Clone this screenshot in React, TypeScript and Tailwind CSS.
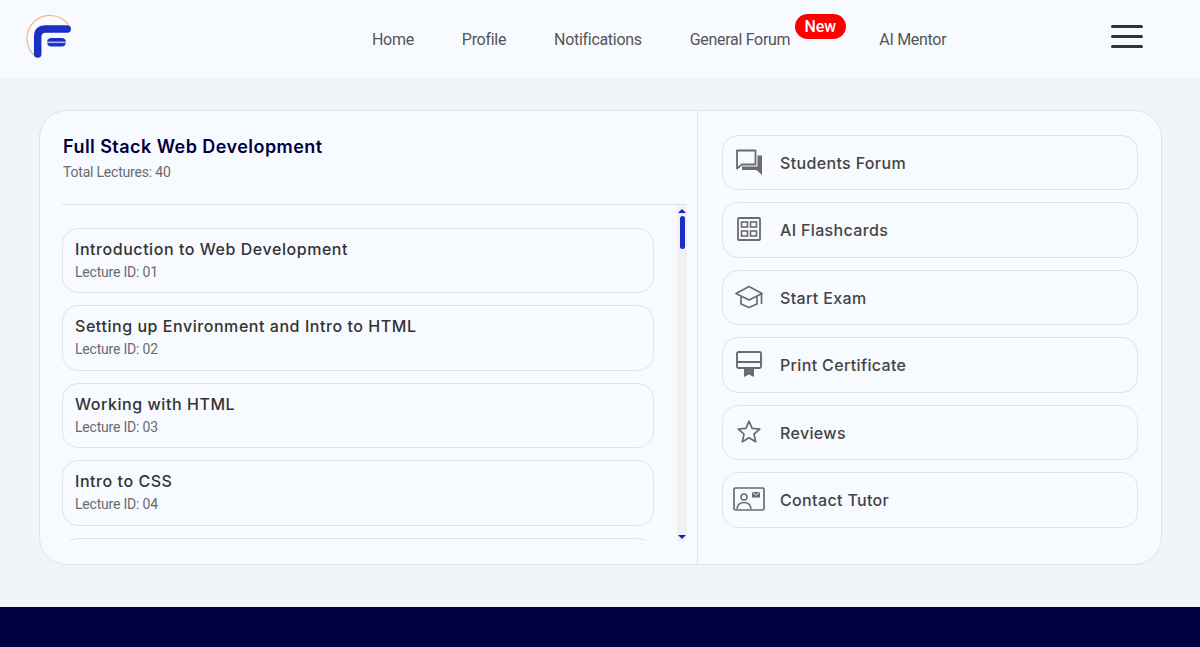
const lectures = [
  { title: 'Introduction to Web Development', id: '01' },
  { title: 'Setting up Environment and Intro to HTML', id: '02' },
  { title: 'Working with HTML', id: '03' },
  { title: 'Intro to CSS', id: '04' },
];

function Logo() {
  return (
    <svg width="46" height="46" viewBox="0 0 46 46" fill="none" className="overflow-visible">
      <path d="M42.4 10.7A23 23 0 1 0 10 42.7" stroke="#f7b27a" strokeWidth="1.1" />
      <path d="M11.7 40V23Q11.7 15 19.7 15H41.2" stroke="#1c2fc4" strokeWidth="7.5" strokeLinecap="round" strokeLinejoin="round" />
      <rect x="21" y="24" width="19" height="8.5" rx="4.2" fill="#1c2fc4" />
      <rect x="21" y="27.5" width="19" height="1.6" fill="#aab2ea" />
    </svg>
  );
}

function ForumIcon() {
  return (
    <svg width="28" height="28" viewBox="0 0 28 28" fill="none">
      <path d="M2 2.5h18.5v14H7l-5 4z" stroke="#6b6b6b" strokeWidth="1.8" strokeLinejoin="round" />
      <path d="M22.5 7.5H27V27l-5.5-5H7v-3.5h15.5z" fill="#6b6b6b" />
    </svg>
  );
}

function CardsIcon() {
  return (
    <svg width="24" height="24" viewBox="0 0 24 24" fill="none" stroke="#6b6b6b" strokeWidth="1.6">
      <rect x="1" y="1" width="22" height="22" rx="1" strokeWidth="1.8" />
      <rect x="4.5" y="5" width="6" height="5" />
      <rect x="13.5" y="5" width="6" height="5" />
      <rect x="4.5" y="14" width="6" height="5" />
      <rect x="13.5" y="14" width="6" height="5" />
    </svg>
  );
}

function CapIcon() {
  return (
    <svg width="28" height="24" viewBox="0 0 28 24" fill="none" stroke="#6b6b6b" strokeWidth="1.7" strokeLinejoin="round">
      <path d="M14 1.5 27 8.5 14 15 1 8.5z" />
      <path d="M6 11.5V19l8 3.5 8-3.5v-7.5" />
      <path d="M26.5 9v10" />
    </svg>
  );
}

function CertificateIcon() {
  return (
    <svg width="26" height="26" viewBox="0 0 26 26" fill="none">
      <rect x="1" y="1" width="24" height="16" rx="1.5" stroke="#6b6b6b" strokeWidth="1.9" />
      <path d="M1 11h24" stroke="#6b6b6b" strokeWidth="2" />
      <path d="M8 17h10v9l-5-2.5L8 26z" fill="#6b6b6b" />
    </svg>
  );
}

function StarIcon() {
  return (
    <svg width="26" height="25" viewBox="0 0 26 25" fill="none">
      <path d="M13 2.2 16.1 9.3 23.8 10 18 15.1 19.7 22.7 13 18.7 6.3 22.7 8 15.1 2.2 10 9.9 9.3z" stroke="#6b6b6b" strokeWidth="1.7" strokeLinejoin="round" />
    </svg>
  );
}

function ContactIcon() {
  return (
    <svg width="32" height="24" viewBox="0 0 32 24" fill="none">
      <rect x="1" y="1" width="30" height="22" rx="1.5" stroke="#6b6b6b" strokeWidth="1.7" />
      <circle cx="11" cy="10" r="3" stroke="#6b6b6b" strokeWidth="1.5" />
      <path d="M4 22c.5-4.5 3.5-6.5 7-6.5s6.5 2 7 6.5" stroke="#6b6b6b" strokeWidth="1.5" />
      <rect x="19" y="5" width="8" height="5.5" fill="#6b6b6b" />
      <path d="m19.5 5.5 3.5 2.8 3.5-2.8" stroke="#f7faff" strokeWidth="0.9" />
    </svg>
  );
}

const actions = [
  { label: 'Students Forum', icon: <ForumIcon /> },
  { label: 'AI Flashcards', icon: <CardsIcon /> },
  { label: 'Start Exam', icon: <CapIcon /> },
  { label: 'Print Certificate', icon: <CertificateIcon /> },
  { label: 'Reviews', icon: <StarIcon /> },
  { label: 'Contact Tutor', icon: <ContactIcon /> },
];

export default function App() {
  return (
    <div className="flex h-[647px] flex-col overflow-hidden bg-[#f1f4f8] font-['Roboto',sans-serif]">
      <header className="flex h-[78px] shrink-0 items-center bg-[#f7faff] pl-[26px] pr-[57px]">
        <div className="-mt-[4px]">
          <Logo />
        </div>
        <nav className="ml-[300px] mt-[2px] flex items-center text-[16px] tracking-[-0.3px] text-[#555555]">
          <a>Home</a>
          <a className="ml-[48px]">Profile</a>
          <a className="ml-[48px]">Notifications</a>
          <a className="relative ml-[48px]">
            General Forum
            <span className="absolute left-[105px] top-[-14px] flex h-[25px] w-[51px] items-center justify-center rounded-full bg-[#ff0000] text-[16px] font-medium leading-none tracking-[-0.2px] text-white">
              New
            </span>
          </a>
          <a className="ml-[89px]">AI Mentor</a>
        </nav>
        <div className="ml-auto -mt-[5px] flex w-[32px] flex-col gap-[7px]">
          <span className="h-[3px] rounded-full bg-[#333333]" />
          <span className="h-[3px] rounded-full bg-[#333333]" />
          <span className="h-[3px] rounded-full bg-[#333333]" />
        </div>
      </header>

      <main className="flex-1 px-[39px] pt-[32px]">
        <div className="flex h-[455px] w-[1123px] rounded-[28px] border border-[#dfe3e8] bg-[#f7faff]">
          <section className="w-[658px] shrink-0 border-r border-[#dfe3e8] pl-[22px] pr-[10px] pt-[24px]">
            <h1 className="ml-px mt-px font-['Inter',sans-serif] text-[18px] font-semibold leading-[22px] tracking-[0.45px] text-[#000040]">
              Full Stack Web Development
            </h1>
            <p className="ml-px mt-[4px] text-[14px] leading-[20px] tracking-[-0.2px] text-[#6b6b6b]">Total Lectures: 40</p>
            <div className="mt-[22px] flex h-[337px] border-t border-[#dfe3e8]">
              <ul className="flex w-[592px] flex-col gap-[12px] overflow-hidden pt-[22.5px]">
                {lectures.map((l) => (
                  <li
                    key={l.id}
                    className="h-[65.5px] shrink-0 rounded-[16px] border border-[#dfe3e8] px-[12px] pt-[9px]"
                  >
                    <div className="font-['Inter',sans-serif] text-[16px] font-medium leading-[22px] tracking-[0.55px] text-[#333333]">
                      {l.title}
                    </div>
                    <div className="mt-[2px] text-[14px] leading-[20px] tracking-[-0.2px] text-[#6b6b6b]">Lecture ID: {l.id}</div>
                  </li>
                ))}
                <li className="h-[65.5px] shrink-0 rounded-[16px] border border-[#dfe3e8]" />
              </ul>
              <div className="relative ml-[23px] w-[10px] bg-[#f1f1f1]">
                <span className="absolute left-[1px] top-[4px] h-0 w-0 border-x-[4px] border-b-[4px] border-x-transparent border-b-[#1c1cc4]" />
                <span className="absolute left-[3px] top-[11px] h-[33px] w-[5px] rounded-full bg-[#1c2fc4]" />
                <span className="absolute bottom-[2px] left-[1px] h-0 w-0 border-x-[4px] border-t-[4px] border-x-transparent border-t-[#1c1cc4]" />
              </div>
            </div>
          </section>

          <section className="flex flex-1 flex-col gap-[12px] pl-[24px] pr-[23px] pt-[23.8px]">
            {actions.map((a) => (
              <button
                key={a.label}
                className="flex h-[55.5px] shrink-0 items-center rounded-[16px] border border-[#dfe3e8] text-left"
              >
                <span className="flex w-[57px] shrink-0 justify-center pb-[2px] pr-[5px]">{a.icon}</span>
                <span className="font-['Inter',sans-serif] text-[16px] font-medium tracking-[0.35px] text-[#444444]">
                  {a.label}
                </span>
              </button>
            ))}
          </section>
        </div>
      </main>

      <footer className="h-[40px] shrink-0 bg-[#000040]" />
    </div>
  );
}
